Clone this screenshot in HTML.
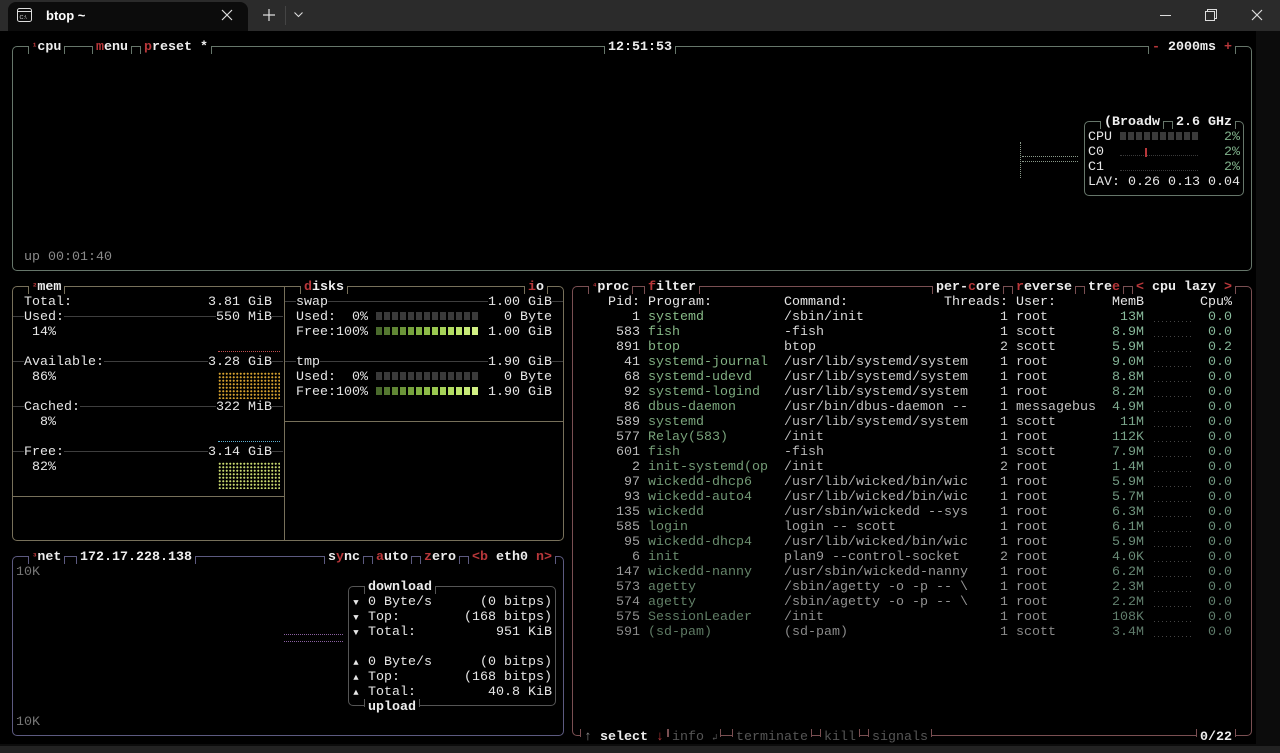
<!DOCTYPE html>
<html><head><meta charset="utf-8"><style>
*{margin:0;padding:0;box-sizing:border-box}
body{width:1280px;height:753px;overflow:hidden;background:#0c0c0c;position:relative;font-family:"Liberation Mono","DejaVu Sans Mono",monospace;font-size:13.33px;color:#e6e6e6}
.bar{position:absolute;left:0;top:0;width:1280px;height:31px;background:#2b2b2b;font-family:"Liberation Sans",sans-serif}
.tab{position:absolute;left:8px;top:2px;width:240px;height:29px;background:#0c0c0c;border-radius:8px 8px 0 0}
.term{position:absolute;left:0;top:31px;width:1256px;height:713px;background:#000}
.bot{position:absolute;left:0;top:746px;width:1280px;height:7px;background:#222}
.a{position:absolute;white-space:pre;line-height:15px;height:15px;margin-top:1px}
pre{position:absolute;font:inherit;line-height:15px;white-space:pre;margin-top:1px}
.box{position:absolute;border:1px solid var(--b);border-radius:5px}
.t{position:absolute;height:15px;line-height:17px;padding:0 4px;background:#000;white-space:pre;font-weight:bold;color:#eee}
.t::before,.t::after{content:'';position:absolute;top:7px;height:8px;border-left:1px solid var(--b)}
.t::before{left:0}.t::after{right:0}
.tb::before,.tb::after{top:0}
.r{color:#b8373a}
.hl{position:absolute;height:0;border-top:1px solid #3e3e3e}
.bk{background:#000}
.sq{display:inline-block;width:6px;height:8px;margin-right:2px;vertical-align:middle}
.g{color:#8a8a8a}
.tri{display:inline-block;width:8px;font-size:9px;text-align:center}
.dt{position:absolute;width:46px;height:1px;border-top:1px dotted #3a3a3a}
</style></head><body>
<div class="bar">
 <div class="tab"></div>
 <svg style="position:absolute;left:17px;top:8px" width="16" height="15" viewBox="0 0 16 15"><rect x="0.5" y="0.5" width="14" height="13" rx="2" fill="none" stroke="#ddd"/><line x1="1" y1="3.5" x2="14" y2="3.5" stroke="#ddd"/><text x="2.5" y="11" font-size="5.5" fill="#ddd" font-family="Liberation Sans">C:\</text></svg>
 <div style="position:absolute;left:46px;top:8px;font-size:13px;color:#fff;font-weight:bold">btop ~</div>
 <svg style="position:absolute;left:221px;top:9px" width="12" height="12"><path d="M1 1L11 11M11 1L1 11" stroke="#ddd" stroke-width="1.2"/></svg>
 <svg style="position:absolute;left:263px;top:9px" width="12" height="12"><path d="M6 0V12M0 6H12" stroke="#ddd" stroke-width="1.2"/></svg>
 <div style="position:absolute;left:285px;top:6px;width:1px;height:19px;background:#444"></div>
 <svg style="position:absolute;left:294px;top:12px" width="9" height="6"><path d="M0.5 0.5L4.5 4.5L8.5 0.5" stroke="#ddd" fill="none" stroke-width="1.1"/></svg>
 <div style="position:absolute;left:1160px;top:15px;width:11px;height:1px;background:#ddd"></div>
 <svg style="position:absolute;left:1205px;top:9px" width="12" height="12"><path d="M0.5 2.5H9.5V11.5H0.5Z M2.5 2.5V0.5H11.5V9.5H9.5" stroke="#ddd" fill="none"/></svg>
 <svg style="position:absolute;left:1251px;top:9px" width="12" height="12"><path d="M1 1L11 11M11 1L1 11" stroke="#ddd" stroke-width="1.2"/></svg>
</div>
<div class="term"></div>
<div class="bot"></div>

<!-- boxes -->
<div class="box" style="--b:#66766a;left:12px;top:46px;width:1240px;height:225px"></div>
<div class="box" style="--b:#66766a;left:1084px;top:121px;width:160px;height:75px"></div>
<div class="box" style="--b:#77705a;left:12px;top:286px;width:552px;height:255px"></div>
<div style="position:absolute;left:284px;top:286px;width:1px;height:255px;background:#77705a"></div>
<div style="position:absolute;left:12px;top:496px;width:272px;height:1px;background:#77705a"></div>
<div style="position:absolute;left:284px;top:421px;width:280px;height:1px;background:#77705a"></div>
<div class="box" style="--b:#5c5a80;left:12px;top:556px;width:552px;height:180px"></div>
<div class="box" style="--b:#555;left:348px;top:586px;width:208px;height:120px"></div>
<div class="box" style="--b:#7a4f52;left:572px;top:286px;width:680px;height:450px"></div>

<!-- cpu titles -->
<span class="t" style="--b:#66766a;left:28px;top:39px"><span class="r" style="font-size:9px;vertical-align:top">¹</span>cpu</span>
<span class="t" style="--b:#66766a;left:92px;top:39px"><span class="r">m</span>enu</span>
<span class="t" style="--b:#66766a;left:140px;top:39px"><span class="r">p</span>reset *</span>
<span class="t" style="--b:#66766a;left:604px;top:39px">12:51:53</span>
<span class="t" style="--b:#66766a;left:1148px;top:39px"><span class="r">-</span> 2000ms <span class="r">+</span></span>
<span class="t" style="--b:#66766a;left:1100px;top:114px">(Broadw</span>
<span class="t" style="--b:#66766a;left:1172px;top:114px">2.6 GHz</span>
<span class="a" style="left:1088px;top:129px">CPU</span>
<span class="a" style="left:1120px;top:129px"><span class="sq" style="background:#3a3a3a"></span><span class="sq" style="background:#3a3a3a"></span><span class="sq" style="background:#3a3a3a"></span><span class="sq" style="background:#3a3a3a"></span><span class="sq" style="background:#3a3a3a"></span><span class="sq" style="background:#3a3a3a"></span><span class="sq" style="background:#3a3a3a"></span><span class="sq" style="background:#3a3a3a"></span><span class="sq" style="background:#3a3a3a"></span><span class="sq" style="background:#3a3a3a"></span></span>
<span class="a" style="left:1224px;top:129px;color:#7fb08a">2%</span>
<span class="a" style="left:1088px;top:144px">C0</span>
<div class="dt" style="left:1120px;top:155px;width:78px"></div>
<div style="position:absolute;left:1145px;top:148px;width:2px;height:9px;background:#b8373a"></div>
<span class="a" style="left:1224px;top:144px;color:#7fb08a">2%</span>
<span class="a" style="left:1088px;top:159px">C1</span>
<div class="dt" style="left:1120px;top:170px;width:78px"></div>
<span class="a" style="left:1224px;top:159px;color:#7fb08a">2%</span>
<span class="a" style="left:1088px;top:174px">LAV: 0.26 0.13 0.04</span>
<div style="position:absolute;left:1020px;top:142px;height:36px;border-left:1px dotted #8a9a8a"></div>
<div style="position:absolute;left:1022px;top:156px;width:56px;border-top:1px dotted #8a9a8a"></div>
<div style="position:absolute;left:1022px;top:161px;width:56px;border-top:1px dotted #8a9a8a"></div>
<span class="a g" style="left:24px;top:249px">up 00:01:40</span>

<!-- mem -->
<span class="t" style="--b:#77705a;left:28px;top:279px"><span class="r" style="font-size:9px;vertical-align:top">²</span>mem</span>
<span class="t" style="--b:#77705a;left:300px;top:279px"><span class="r">d</span>isks</span>
<span class="t" style="--b:#77705a;left:524px;top:279px"><span class="r">i</span>o</span>
<div class="hl" style="left:13px;top:316px;width:270px"></div>
<div class="hl" style="left:13px;top:361px;width:270px"></div>
<div class="hl" style="left:13px;top:406px;width:270px"></div>
<div class="hl" style="left:13px;top:451px;width:270px"></div>
<div class="hl" style="left:285px;top:301px;width:278px"></div>
<div class="hl" style="left:285px;top:361px;width:278px"></div>
<span class="a" style="left:24px;top:294px">Total:</span><span class="a" style="left:208px;top:294px">3.81 GiB</span>
<span class="a bk" style="left:24px;top:309px">Used:</span><span class="a bk" style="left:216px;top:309px">550 MiB</span>
<span class="a" style="left:32px;top:324px">14%</span>
<div style="position:absolute;left:218px;top:351px;width:62px;border-top:1px dotted #c05050"></div>
<span class="a bk" style="left:24px;top:354px">Available:</span><span class="a bk" style="left:208px;top:354px">3.28 GiB</span>
<span class="a" style="left:32px;top:369px">86%</span>
<div style="position:absolute;left:218px;top:372px;width:62px;height:27px;background:radial-gradient(circle,#d4a030 0.9px,transparent 1.2px);background-size:3.5px 3.5px"></div>
<span class="a bk" style="left:24px;top:399px">Cached:</span><span class="a bk" style="left:216px;top:399px">322 MiB</span>
<span class="a" style="left:40px;top:414px">8%</span>
<div style="position:absolute;left:218px;top:441px;width:62px;border-top:1px dotted #60b0d0"></div>
<span class="a bk" style="left:24px;top:444px">Free:</span><span class="a bk" style="left:208px;top:444px">3.14 GiB</span>
<span class="a" style="left:32px;top:459px">82%</span>
<div style="position:absolute;left:218px;top:462px;width:62px;height:27px;background:radial-gradient(circle,#c8d870 0.9px,transparent 1.2px);background-size:3.5px 3.5px"></div>

<span class="a bk" style="left:296px;top:294px">swap</span><span class="a bk" style="left:488px;top:294px">1.00 GiB</span>
<span class="a" style="left:296px;top:309px">Used:  0% <span class="sq" style="background:#3a3a3a"></span><span class="sq" style="background:#3a3a3a"></span><span class="sq" style="background:#3a3a3a"></span><span class="sq" style="background:#3a3a3a"></span><span class="sq" style="background:#3a3a3a"></span><span class="sq" style="background:#3a3a3a"></span><span class="sq" style="background:#3a3a3a"></span><span class="sq" style="background:#3a3a3a"></span><span class="sq" style="background:#3a3a3a"></span><span class="sq" style="background:#3a3a3a"></span><span class="sq" style="background:#3a3a3a"></span><span class="sq" style="background:#3a3a3a"></span><span class="sq" style="background:#3a3a3a"></span>   0 Byte</span>
<span class="a" style="left:296px;top:324px">Free:100% <span class="sq" style="background:#4a6a2c"></span><span class="sq" style="background:#557830"></span><span class="sq" style="background:#608634"></span><span class="sq" style="background:#6b9438"></span><span class="sq" style="background:#76a23d"></span><span class="sq" style="background:#82b042"></span><span class="sq" style="background:#8ebc48"></span><span class="sq" style="background:#9ac850"></span><span class="sq" style="background:#a6d258"></span><span class="sq" style="background:#b2dc62"></span><span class="sq" style="background:#bee46c"></span><span class="sq" style="background:#c8ea78"></span><span class="sq" style="background:#d2f084"></span> 1.00 GiB</span>
<span class="a bk" style="left:296px;top:354px">tmp</span><span class="a bk" style="left:488px;top:354px">1.90 GiB</span>
<span class="a" style="left:296px;top:369px">Used:  0% <span class="sq" style="background:#3a3a3a"></span><span class="sq" style="background:#3a3a3a"></span><span class="sq" style="background:#3a3a3a"></span><span class="sq" style="background:#3a3a3a"></span><span class="sq" style="background:#3a3a3a"></span><span class="sq" style="background:#3a3a3a"></span><span class="sq" style="background:#3a3a3a"></span><span class="sq" style="background:#3a3a3a"></span><span class="sq" style="background:#3a3a3a"></span><span class="sq" style="background:#3a3a3a"></span><span class="sq" style="background:#3a3a3a"></span><span class="sq" style="background:#3a3a3a"></span><span class="sq" style="background:#3a3a3a"></span>   0 Byte</span>
<span class="a" style="left:296px;top:384px">Free:100% <span class="sq" style="background:#4a6a2c"></span><span class="sq" style="background:#557830"></span><span class="sq" style="background:#608634"></span><span class="sq" style="background:#6b9438"></span><span class="sq" style="background:#76a23d"></span><span class="sq" style="background:#82b042"></span><span class="sq" style="background:#8ebc48"></span><span class="sq" style="background:#9ac850"></span><span class="sq" style="background:#a6d258"></span><span class="sq" style="background:#b2dc62"></span><span class="sq" style="background:#bee46c"></span><span class="sq" style="background:#c8ea78"></span><span class="sq" style="background:#d2f084"></span> 1.90 GiB</span>

<!-- net -->
<span class="t" style="--b:#5c5a80;left:28px;top:549px"><span class="r" style="font-size:9px;vertical-align:top">³</span>net</span>
<span class="t" style="--b:#5c5a80;left:76px;top:549px">172.17.228.138</span>
<span class="t" style="--b:#5c5a80;left:324px;top:549px">s<span class="r">y</span>nc</span>
<span class="t" style="--b:#5c5a80;left:372px;top:549px"><span class="r">a</span>uto</span>
<span class="t" style="--b:#5c5a80;left:420px;top:549px"><span class="r">z</span>ero</span>
<span class="t" style="--b:#5c5a80;left:468px;top:549px"><span class="r">&lt;b</span> eth0 <span class="r">n&gt;</span></span>
<span class="a g" style="left:16px;top:564px;color:#777">10K</span>
<span class="a g" style="left:16px;top:714px;color:#777">10K</span>
<div style="position:absolute;left:284px;top:634px;width:59px;border-top:1px dotted #8a60a0"></div>
<div style="position:absolute;left:284px;top:641px;width:59px;border-top:1px dotted #8a60a0"></div>
<span class="t" style="--b:#555;left:364px;top:579px">download</span>
<span class="t tb" style="--b:#555;left:364px;top:699px">upload</span>
<span class="a" style="left:352px;top:594px"><span class="tri">▼</span> 0 Byte/s</span><span class="a" style="left:480px;top:594px">(0 bitps)</span>
<span class="a" style="left:352px;top:609px"><span class="tri">▼</span> Top:</span><span class="a" style="left:464px;top:609px">(168 bitps)</span>
<span class="a" style="left:352px;top:624px"><span class="tri">▼</span> Total:</span><span class="a" style="left:496px;top:624px">951 KiB</span>
<span class="a" style="left:352px;top:654px"><span class="tri">▲</span> 0 Byte/s</span><span class="a" style="left:480px;top:654px">(0 bitps)</span>
<span class="a" style="left:352px;top:669px"><span class="tri">▲</span> Top:</span><span class="a" style="left:464px;top:669px">(168 bitps)</span>
<span class="a" style="left:352px;top:684px"><span class="tri">▲</span> Total:</span><span class="a" style="left:488px;top:684px">40.8 KiB</span>

<!-- proc -->
<span class="t" style="--b:#7a4f52;left:588px;top:279px"><span class="r" style="font-size:9px;vertical-align:top">⁴</span>proc</span>
<span class="t" style="--b:#7a4f52;left:644px;top:279px"><span class="r">f</span>ilter</span>
<span class="t" style="--b:#7a4f52;left:932px;top:279px">per-<span class="r">c</span>ore</span>
<span class="t" style="--b:#7a4f52;left:1012px;top:279px"><span class="r">r</span>everse</span>
<span class="t" style="--b:#7a4f52;left:1084px;top:279px">tre<span class="r">e</span></span>
<span class="t" style="--b:#7a4f52;left:1132px;top:279px"><span class="r">&lt;</span> cpu lazy <span class="r">&gt;</span></span>
<span class="a" style="left:608px;top:294px">Pid:</span>
<span class="a" style="left:648px;top:294px">Program:</span>
<span class="a" style="left:784px;top:294px">Command:</span>
<span class="a" style="left:944px;top:294px">Threads:</span>
<span class="a" style="left:1016px;top:294px">User:</span>
<span class="a" style="left:1112px;top:294px">MemB</span>
<span class="a" style="left:1200px;top:294px">Cpu%</span>
<pre style="left:600px;top:309px;width:40px;text-align:right;background:linear-gradient(#e0e0e0,#8a8a8a);-webkit-background-clip:text;background-clip:text;color:transparent">1
583
891
41
68
92
86
589
577
601
2
97
93
135
585
95
6
147
573
574
575
591</pre>
<pre style="left:648px;top:309px;background:linear-gradient(#8cc08c,#5e7a64);-webkit-background-clip:text;background-clip:text;color:transparent">systemd
fish
btop
systemd-journal
systemd-udevd
systemd-logind
dbus-daemon
systemd
Relay(583)
fish
init-systemd(op
wickedd-dhcp6
wickedd-auto4
wickedd
login
wickedd-dhcp4
init
wickedd-nanny
agetty
agetty
SessionLeader
(sd-pam)</pre>
<pre style="left:784px;top:309px;background:linear-gradient(#e0e0e0,#8a8a8a);-webkit-background-clip:text;background-clip:text;color:transparent">/sbin/init
-fish
btop
/usr/lib/systemd/system
/usr/lib/systemd/system
/usr/lib/systemd/system
/usr/bin/dbus-daemon --
/usr/lib/systemd/system
/init
-fish
/init
/usr/lib/wicked/bin/wic
/usr/lib/wicked/bin/wic
/usr/sbin/wickedd --sys
login -- scott
/usr/lib/wicked/bin/wic
plan9 --control-socket
/usr/sbin/wickedd-nanny
/sbin/agetty -o -p -- \
/sbin/agetty -o -p -- \
/init
(sd-pam)</pre>
<pre style="left:1000px;top:309px;background:linear-gradient(#e0e0e0,#8a8a8a);-webkit-background-clip:text;background-clip:text;color:transparent">1 root
1 scott
2 scott
1 root
1 root
1 root
1 messagebus
1 scott
1 root
1 scott
2 root
1 root
1 root
1 root
1 root
1 root
2 root
1 root
1 root
1 root
1 root
1 scott</pre>
<pre style="left:1096px;top:309px;width:48px;text-align:right;background:linear-gradient(#8cc0a0,#5e7a6a);-webkit-background-clip:text;background-clip:text;color:transparent">13M
8.9M
5.9M
9.0M
8.8M
8.2M
4.9M
11M
112K
7.9M
1.4M
5.9M
5.7M
6.3M
6.1M
5.9M
4.0K
6.2M
2.3M
2.2M
108K
3.4M</pre>
<div style="position:absolute;left:1154px;top:321px;width:38px;height:330px;background:repeating-linear-gradient(to right,#444 0,#444 1px,transparent 1px,transparent 4px);-webkit-mask:repeating-linear-gradient(to bottom,#000 0,#000 1px,transparent 1px,transparent 15px);mask:repeating-linear-gradient(to bottom,#000 0,#000 1px,transparent 1px,transparent 15px)"></div>
<pre style="left:1208px;top:309px;background:linear-gradient(#8cc0a0,#5e7a6a);-webkit-background-clip:text;background-clip:text;color:transparent">0.0
0.0
0.2
0.0
0.0
0.0
0.0
0.0
0.0
0.0
0.0
0.0
0.0
0.0
0.0
0.0
0.0
0.0
0.0
0.0
0.0
0.0</pre>
<span class="t tb" style="--b:#7a4f52;left:580px;top:729px;font-weight:normal"><span style="color:#888">↑</span> <b>select</b> <span class="r">↓</span></span>
<span class="t tb" style="--b:#7a4f52;left:668px;top:729px;font-weight:normal;color:#555">info <span style="font-size:9px">↲</span></span>
<span class="t tb" style="--b:#7a4f52;left:732px;top:729px;font-weight:normal;color:#555">terminate</span>
<span class="t tb" style="--b:#7a4f52;left:820px;top:729px;font-weight:normal;color:#555">kill</span>
<span class="t tb" style="--b:#7a4f52;left:868px;top:729px;font-weight:normal;color:#555">signals</span>
<span class="t tb" style="--b:#7a4f52;left:1196px;top:729px">0/22</span>
</body></html>
